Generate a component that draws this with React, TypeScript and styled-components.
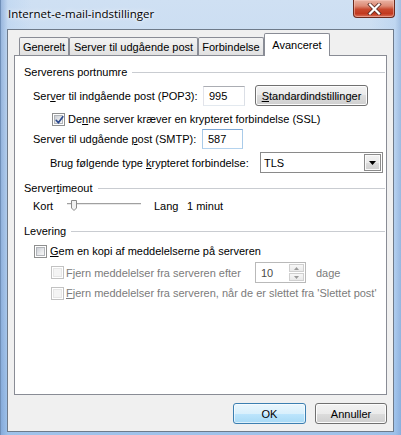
import React from "react";
import styled, { createGlobalStyle } from "styled-components";

const Global = createGlobalStyle`
  html, body { margin: 0; padding: 0; width: 401px; height: 435px; overflow: hidden; }
  body { font-family: "Liberation Sans", Arial, sans-serif; font-size: 11px; color: #000; }
  * { box-sizing: border-box; }
`;

const Window = styled.div`
  width: 401px;
  height: 435px;
  display: flex;
  flex-direction: column;
  background:
    linear-gradient(90deg, rgba(110,150,205,0.55) 0px, rgba(150,190,235,0.2) 7px, rgba(0,0,0,0) 30px, rgba(0,0,0,0) 370px, rgba(150,190,235,0.25) 394px, rgba(110,150,205,0.5) 401px),
    linear-gradient(180deg, #cfe0f3 0%, #c3d8f0 30%, #b4cfee 70%, #9fc2ea 100%);
  border-left: 1px solid #6f8fb8;
`;

const TitleBar = styled.div`
  height: 29px;
  display: flex;
  align-items: flex-start;
  justify-content: space-between;
  padding-left: 7px;
`;

const Title = styled.div`
  font-family: "Open Sans", "Noto Sans", sans-serif;
  font-size: 11.5px;
  line-height: 14px;
  margin-top: 7px;
  color: #000;
  text-shadow: 0 0 6px rgba(255, 255, 255, 0.95), 0 0 3px rgba(255, 255, 255, 0.9);
`;

const CloseButton = styled.div`
  width: 42px;
  height: 18px;
  margin-right: 6px;
  border: 1px solid #6b2a1e;
  border-top: none;
  border-radius: 0 0 4px 4px;
  background: linear-gradient(180deg, #e9b3a4 0%, #dd8b76 35%, #c8492f 55%, #c2391f 80%, #d9705a 100%);
  box-shadow: inset 0 0 0 1px rgba(255, 210, 200, 0.45);
  display: flex;
  align-items: center;
  justify-content: center;
`;

const Client = styled.div`
  flex: 1;
  margin: 0 7px 3px 6px;
  border: 1px solid #6e7a8a;
  background: #f0f0f0;
  display: flex;
  flex-direction: column;
  padding: 3px 6px 0 6px;
`;

const TabStrip = styled.div`
  display: flex;
  align-items: flex-end;
  height: 22px;
  padding-left: 5px;
  position: relative;
  z-index: 1;
`;

const Tab = styled.div<{ $w: number; $active?: boolean }>`
  width: ${(p) => p.$w}px;
  height: ${(p) => (p.$active ? 23 : 18)}px;
  margin-bottom: ${(p) => (p.$active ? -1 : 0)}px;
  border: 1px solid #898c95;
  border-bottom: none;
  border-radius: 2px 2px 0 0;
  background: ${(p) => (p.$active ? "#ffffff" : "linear-gradient(180deg, #f3f3f3 0%, #ebebeb 50%, #e0e0e0 100%)")};
  display: flex;
  align-items: ${(p) => (p.$active ? "flex-start" : "center")};
  padding-top: ${(p) => (p.$active ? 5 : 0)}px;
  justify-content: center;
  white-space: nowrap;
`;

const Panel = styled.div`
  height: 340px;
  border: 1px solid #898c95;
  background: #ffffff;
  display: flex;
  flex-direction: column;
`;

const GroupHeader = styled.div<{ $top: number }>`
  display: flex;
  align-items: center;
  height: 14px;
  margin-top: ${(p) => p.$top}px;
  padding-left: 9px;
  padding-right: 1px;
  white-space: nowrap;
  &::after {
    content: "";
    flex: 1;
    height: 1px;
    margin-left: 5px;
    background: #c9ccd1;
  }
`;

const Row = styled.div<{ $top: number; $h: number; $left: number }>`
  display: flex;
  align-items: center;
  height: ${(p) => p.$h}px;
  margin-top: ${(p) => p.$top}px;
  padding-left: ${(p) => p.$left}px;
  white-space: nowrap;
`;

const Label = styled.span<{ $w?: number; $disabled?: boolean; $ml?: number }>`
  ${(p) => (p.$w ? `width: ${p.$w}px; flex: none;` : "")}
  margin-left: ${(p) => p.$ml ?? 0}px;
  color: ${(p) => (p.$disabled ? "#7b7b7b" : "#000")};
`;

const U = styled.span`
  text-decoration: underline;
  text-underline-offset: 1px;
`;

const TextBox = styled.div<{ $w: number; $focus?: boolean }>`
  width: ${(p) => p.$w}px;
  height: 20px;
  border: 1px solid;
  border-color: ${(p) => (p.$focus ? "#7fa9d6 #a9cbe9 #b4d3ee #a9cbe9" : "#abadb3 #dbdfe6 #e3e9ef #e2e3ea")};
  background: #fff;
  padding-left: 5px;
  display: flex;
  align-items: center;
  flex: none;
`;

const Button = styled.div<{ $w: number; $default?: boolean; $ml?: number }>`
  width: ${(p) => p.$w}px;
  height: 21px;
  margin-left: ${(p) => p.$ml ?? 0}px;
  border: 1px solid ${(p) => (p.$default ? "#3c7fb1" : "#707070")};
  border-radius: 3px;
  background: ${(p) =>
    p.$default
      ? "linear-gradient(180deg, #eaf6fd 0%, #d9f0fc 50%, #bee6fd 50%, #a7d9f5 100%)"
      : "linear-gradient(180deg, #f2f2f2 0%, #ebebeb 50%, #dddddd 50%, #cfcfcf 100%)"};
  box-shadow: inset 0 0 0 1px ${(p) => (p.$default ? "rgba(255,255,255,0.6)" : "#fcfcfc")};
  display: flex;
  align-items: center;
  justify-content: center;
  flex: none;
`;

const CheckBox = styled.div<{ $disabled?: boolean }>`
  width: 13px;
  height: 13px;
  flex: none;
  border: 1px solid ${(p) => (p.$disabled ? "#c2c2c2" : "#8e8f8f")};
  background: #fff;
  position: relative;
  &::after {
    content: "";
    position: absolute;
    inset: 1px;
    border: 1px solid ${(p) => (p.$disabled ? "#e6e6e6" : "#b2b5ba")};
    background: ${(p) => (p.$disabled ? "#f4f4f4" : "linear-gradient(135deg, #cbcfd5 0%, #e9eaec 60%, #f6f6f6 100%)")};
  }
  svg { position: absolute; left: 0; top: 0; z-index: 1; }
`;

const Combo = styled.div`
  width: 123px;
  height: 21px;
  border: 1px solid #8a8a8a;
  background: #fff;
  display: flex;
  align-items: center;
  justify-content: space-between;
  padding: 0 1px 0 3px;
  flex: none;
`;

const DropBtn = styled.div`
  width: 17px;
  height: 17px;
  border: 1px solid #8b8b8b;
  background: linear-gradient(180deg, #f2f2f2 0%, #ebebeb 50%, #dddddd 50%, #cfcfcf 100%);
  box-shadow: inset 0 0 0 1px #fafafa;
  display: flex;
  align-items: center;
  justify-content: center;
`;

const Spin = styled.div`
  width: 51px;
  height: 21px;
  border: 1px solid #b9b9b9;
  background: #fff;
  display: flex;
  align-items: center;
  justify-content: space-between;
  padding: 1px 1px 1px 5px;
  margin-left: 2px;
  color: #4a4a4a;
  flex: none;
`;

const SpinBtns = styled.div`
  width: 15px;
  height: 100%;
  display: flex;
  flex-direction: column;
  gap: 1px;
`;

const SpinHalf = styled.div`
  flex: 1;
  border: 1px solid #cfcfcf;
  background: linear-gradient(180deg, #f7f7f7, #e9e9e9);
  display: flex;
  align-items: center;
  justify-content: center;
`;

const SliderBox = styled.div`
  width: 76px;
  height: 12px;
  flex: none;
  display: flex;
`;

const ButtonBar = styled.div`
  display: flex;
  justify-content: flex-end;
  margin-top: 8px;
  padding-right: 0px;
`;

const Check = ({ checked, disabled }: { checked?: boolean; disabled?: boolean }) => (
  <CheckBox $disabled={disabled}>
    {checked && (
      <svg width="13" height="13" viewBox="0 0 13 13">
        <path d="M3.2 6.3 L5.4 8.8 L9.8 2.8" fill="none" stroke="#2c4a8e" strokeWidth="1.7" strokeLinecap="round" strokeLinejoin="round" />
      </svg>
    )}
  </CheckBox>
);

export default function App() {
  return (
    <Window>
      <Global />
      <TitleBar>
        <Title>Internet-e-mail-indstillinger</Title>
        <CloseButton>
          <svg width="15" height="12" viewBox="0 0 15 12">
            <path d="M3 1.5 L12 10.5 M12 1.5 L3 10.5" stroke="#5a2a22" strokeWidth="3.8" strokeLinecap="square" />
            <path d="M3 1.5 L12 10.5 M12 1.5 L3 10.5" stroke="#ffffff" strokeWidth="2.2" strokeLinecap="square" />
          </svg>
        </CloseButton>
      </TitleBar>
      <Client>
        <TabStrip>
          <Tab $w={50}>Generelt</Tab>
          <Tab $w={129}>Server til udgående post</Tab>
          <Tab $w={66}>Forbindelse</Tab>
          <Tab $w={66} $active>Avanceret</Tab>
        </TabStrip>
        <Panel>
          <GroupHeader $top={9}>Serverens portnumre</GroupHeader>
          <Row $top={6} $h={21} $left={18}>
            <Label $w={170}>
              Ser<U>v</U>er til indgående post (POP3):
            </Label>
            <TextBox $w={42}>995</TextBox>
            <Button $w={113} $ml={10}>
              <span>
                <U>S</U>tandardindstillinger
              </span>
            </Button>
          </Row>
          <Row $top={6} $h={14} $left={37}>
            <Check checked />
            <Label $ml={3}>
              De<U>n</U>ne server kræver en krypteret forbindelse (SSL)
            </Label>
          </Row>
          <Row $top={3} $h={20} $left={18}>
            <Label $w={169}>
              Server til udgående <U>p</U>ost (SMTP):
            </Label>
            <TextBox $w={41} $focus>
              587
            </TextBox>
          </Row>
          <Row $top={3} $h={21} $left={35}>
            <Label $w={210}>
              Brug følgende type <U>k</U>rypteret forbindelse:
            </Label>
            <Combo>
              <span>TLS</span>
              <DropBtn>
                <svg width="7" height="4" viewBox="0 0 7 4">
                  <path d="M0 0 H7 L3.5 4 Z" fill="#000" />
                </svg>
              </DropBtn>
            </Combo>
          </Row>

          <GroupHeader $top={8}>
            <span>
              Server<U>t</U>imeout
            </span>
          </GroupHeader>
          <Row $top={4} $h={14} $left={18}>
            <Label $w={34}>Kort</Label>
            <SliderBox>
              <svg width="76" height="12" viewBox="0 0 76 12">
                <rect x="0" y="3" width="74" height="1" fill="#a0a0a0" />
                <rect x="0" y="4" width="74" height="1" fill="#e8e8e8" />
                <path d="M4.5 0.5 H9.5 V8 L7 10.5 L4.5 8 Z" fill="#f2f2f2" stroke="#8a8a8a" />
              </svg>
            </SliderBox>
            <Label $w={33} $ml={11}>
              Lang
            </Label>
            <Label>1 minut</Label>
          </Row>

          <GroupHeader $top={11}>Levering</GroupHeader>
          <Row $top={6} $h={14} $left={19}>
            <Check />
            <Label $ml={3}>
              <U>G</U>em en kopi af meddelelserne på serveren
            </Label>
          </Row>
          <Row $top={4} $h={21} $left={36}>
            <Check disabled />
            <Label $ml={2} $w={187} $disabled>
              F<U>j</U>ern meddelelser fra serveren efter
            </Label>
            <Spin>
              <span>10</span>
              <SpinBtns>
                <SpinHalf>
                  <svg width="5" height="3" viewBox="0 0 5 3">
                    <path d="M0 3 H5 L2.5 0 Z" fill="#9a9a9a" />
                  </svg>
                </SpinHalf>
                <SpinHalf>
                  <svg width="5" height="3" viewBox="0 0 5 3">
                    <path d="M0 0 H5 L2.5 3 Z" fill="#9a9a9a" />
                  </svg>
                </SpinHalf>
              </SpinBtns>
            </Spin>
            <Label $ml={10} $disabled>
              dage
            </Label>
          </Row>
          <Row $top={3} $h={14} $left={36}>
            <Check disabled />
            <Label $ml={2} $disabled>
              <U>F</U>jern meddelelser fra serveren, når de er slettet fra 'Slettet post'
            </Label>
          </Row>
        </Panel>
        <ButtonBar>
          <Button $w={73} $default>
            OK
          </Button>
          <Button $w={72} $ml={9}>
            Annuller
          </Button>
        </ButtonBar>
      </Client>
    </Window>
  );
}
